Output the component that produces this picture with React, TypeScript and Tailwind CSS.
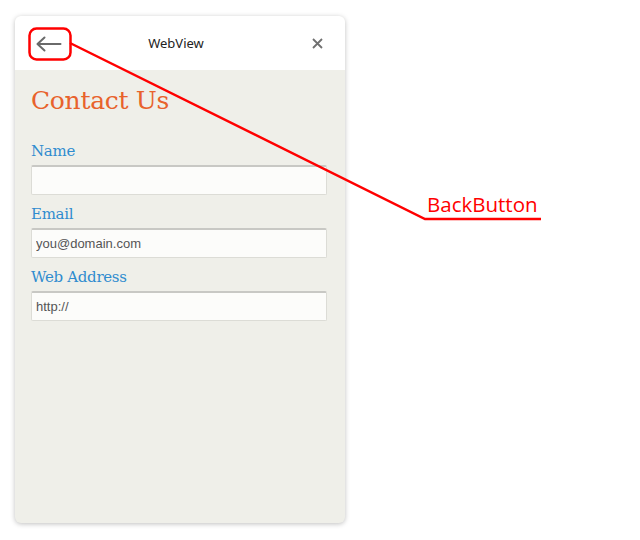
function Field({ label, placeholder }: { label: string; placeholder?: string }) {
  return (
    <div className="flex flex-col">
      <label className="text-[15px] leading-[18px] text-[#2f8ccf] font-['DejaVu_Serif',serif] tracking-[-0.3px]">
        {label}
      </label>
      <input
        readOnly
        placeholder={placeholder}
        className="mt-[5px] h-[30px] w-[296px] bg-[#fcfcfa] border border-[#dcdcd6] border-t-[2px] border-t-[#c8c8c4] rounded-[2px] px-[4px] text-[13px] text-[#555] placeholder:text-[#555] font-['Liberation_Sans',Arial,sans-serif] outline-none"
      />
    </div>
  );
}

export default function App() {
  return (
    <div className="relative w-[640px] h-[540px] bg-white overflow-hidden">
      <div className="pt-[16px] pl-[15px]">
        <div className="w-[330px] h-[507px] rounded-[6px] bg-[#efefe9] shadow-[0_1px_5px_rgba(0,0,0,0.25)] overflow-hidden flex flex-col">
          <div className="h-[54px] pt-[1px] bg-white grid grid-cols-[60px_1fr_60px] items-center shrink-0">
            <svg className="ml-[21px]" width="26" height="16" viewBox="0 0 26 16" fill="none">
              <path d="M1.5 8H24.5M1.5 8L8.5 1.5M1.5 8L8.5 14.5" stroke="#6a6a6a" strokeWidth="2" strokeLinecap="round" />
            </svg>
            <span className="text-center text-[13px] text-[#222] font-['Noto_Sans',sans-serif] -ml-[8px]">WebView</span>
            <svg className="ml-[27px]" width="11" height="11" viewBox="0 0 11 11" fill="none">
              <path d="M1 1L10 10M10 1L1 10" stroke="#707070" strokeWidth="1.8" />
            </svg>
          </div>
          <div className="px-[16px] pt-[16px] flex flex-col">
            <h1 className="text-[25px] leading-[30px] text-[#e8622c] font-['DejaVu_Serif',serif] tracking-[-0.3px]">
              Contact Us
            </h1>
            <div className="mt-[26px] flex flex-col gap-[10px]">
              <Field label="Name" />
              <Field label="Email" placeholder="you@domain.com" />
              <Field label="Web Address" placeholder="http://" />
            </div>
          </div>
        </div>
      </div>

      {/* annotation overlay */}
      <svg className="absolute left-0 top-0 pointer-events-none" width="640" height="540">
        <rect x="29.5" y="28.5" width="41" height="31" rx="7" fill="none" stroke="#f00" strokeWidth="2.5" />
        <polyline points="70,43 425,219 541,219" fill="none" stroke="#f00" strokeWidth="2.5" />
      </svg>
      <span className="absolute left-[427px] top-[191px] text-[20.5px] leading-[26px] text-[#f00] font-['Open_Sans',sans-serif]">
        BackButton
      </span>
    </div>
  );
}
